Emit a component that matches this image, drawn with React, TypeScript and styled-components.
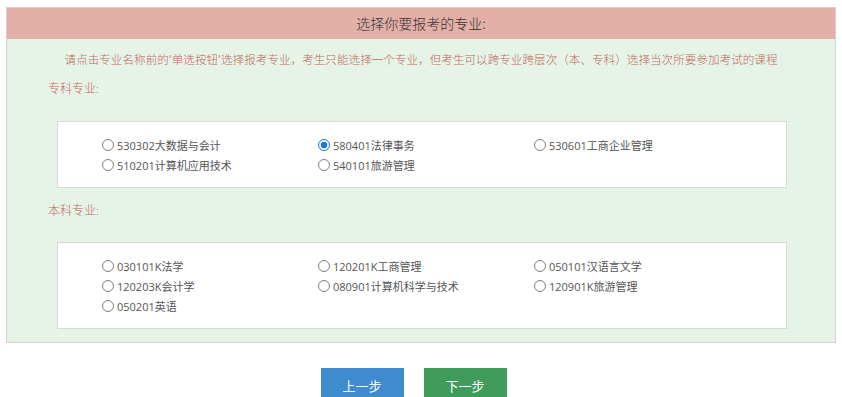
import React, { useState } from "react";
import styled, { createGlobalStyle } from "styled-components";

const Global = createGlobalStyle`
  html, body { margin: 0; padding: 0; background: #fff; }
  body { font-family: "Open Sans", "Noto Sans CJK SC", sans-serif; }
`;

const Panel = styled.div`
  margin: 7px 6px 0 6px;
  border: 1px solid #d2d2d2;
  background: #e6f4e8;
`;

const Header = styled.div`
  height: 31px;
  line-height: 31px;
  background: #e4afa7;
  text-align: center;
  font-size: 14px;
  font-weight: 300;
  color: #333;
  font-family: "Noto Sans CJK SC", sans-serif;
`;

const Body = styled.div`
  padding: 10px 0 13px 0;
`;

const Notice = styled.div`
  text-align: center;
  font-size: 11.6px;
  font-weight: 300;
  line-height: 20px;
  color: #c4665a;
  font-family: "Noto Sans CJK SC", sans-serif;
`;

const SectionLabel = styled.div<{ $top: number }>`
  margin-top: ${(p) => p.$top}px;
  padding-left: 41px;
  font-size: 12px;
  font-weight: 300;
  line-height: 20px;
  color: #c4665a;
  font-family: "Noto Sans CJK SC", sans-serif;
`;

const Box = styled.div<{ $top: number }>`
  margin: ${(p) => p.$top}px 48px 0 50px;
  background: #fff;
  border: 1px solid #d6dbd6;
  padding: 13px 0 12px 44px;
`;

const Grid = styled.div`
  display: grid;
  grid-template-columns: repeat(3, 216px);
  grid-auto-rows: 20px;
`;

const Option = styled.label`
  display: flex;
  align-items: center;
  gap: 3px;
  font-size: 11px;
  color: #555;
  cursor: pointer;
  font-family: "Open Sans", "Noto Sans CJK SC", sans-serif;
`;

const Radio = styled.input`
  appearance: none;
  margin: 0;
  width: 12px;
  height: 12px;
  border-radius: 50%;
  border: 1px solid #808080;
  background: #fff;
  box-sizing: border-box;
  &:checked {
    border-color: #1a73e8;
    background: radial-gradient(circle, #1a73e8 0 3.2px, #fff 3.6px);
  }
`;

const Buttons = styled.div`
  display: flex;
  justify-content: center;
  gap: 20px;
  margin-top: 25px;
  padding-right: 15px;
`;

const Btn = styled.button<{ $color: string }>`
  width: 83px;
  height: 34px;
  border: none;
  background: ${(p) => p.$color};
  color: #fff;
  font-size: 13px;
  font-family: "Noto Sans CJK SC", sans-serif;
  padding: 0;
`;

const zhuanke = [
  "530302大数据与会计",
  "580401法律事务",
  "530601工商企业管理",
  "510201计算机应用技术",
  "540101旅游管理",
];
const benke = [
  "030101K法学",
  "120201K工商管理",
  "050101汉语言文学",
  "120203K会计学",
  "080901计算机科学与技术",
  "120901K旅游管理",
  "050201英语",
];

export default function App() {
  const [sel, setSel] = useState("580401法律事务");
  const render = (list: string[]) => (
    <Grid>
      {list.map((m) => (
        <Option key={m}>
          <Radio
            type="radio"
            name="major"
            checked={sel === m}
            onChange={() => setSel(m)}
          />
          {m}
        </Option>
      ))}
    </Grid>
  );
  return (
    <>
      <Global />
      <Panel>
        <Header>选择你要报考的专业:</Header>
        <Body>
          <Notice>
            请点击专业名称前的'单选按钮'选择报考专业，考生只能选择一个专业，但考生可以跨专业跨层次（本、专科）选择当次所要参加考试的课程
          </Notice>
          <SectionLabel $top={9}>专科专业:</SectionLabel>
          <Box $top={23}>{render(zhuanke)}</Box>
          <SectionLabel $top={12}>本科专业:</SectionLabel>
          <Box $top={22}>{render(benke)}</Box>
        </Body>
      </Panel>
      <Buttons>
        <Btn $color="#3f8bcf">上一步</Btn>
        <Btn $color="#409c5a">下一步</Btn>
      </Buttons>
    </>
  );
}
